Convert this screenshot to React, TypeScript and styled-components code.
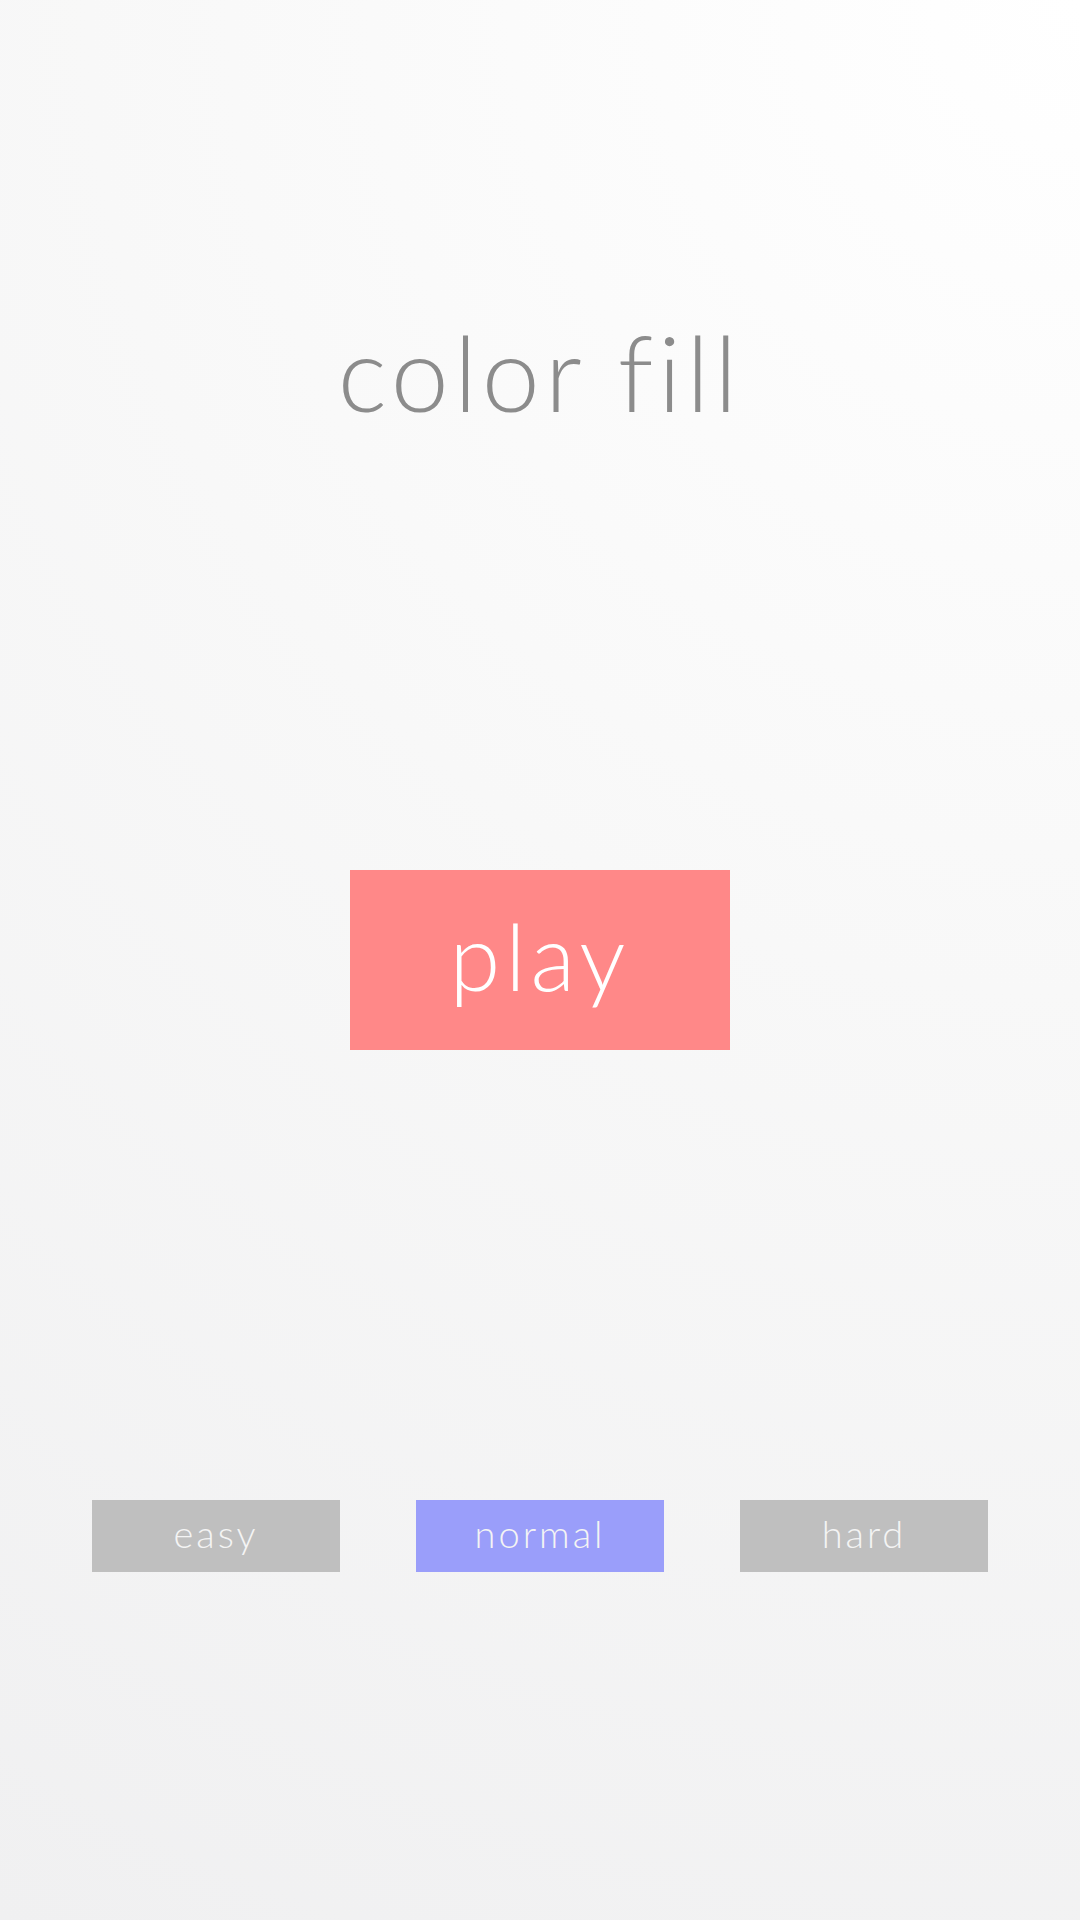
import React, { useState } from "react";
import styled, { createGlobalStyle } from "styled-components";

const GlobalStyle = createGlobalStyle`
  html, body {
    margin: 0;
    padding: 0;
  }
  body {
    font-family: "Lato", "Open Sans", sans-serif;
  }
`;

const Screen = styled.div`
  width: 1080px;
  height: 1920px;
  display: flex;
  flex-direction: column;
  align-items: center;
  background: radial-gradient(circle at 100% 0%, #ffffff 0%, #f8f8f8 45%, #f0f0f1 100%);
  overflow: hidden;
`;

const Title = styled.h1`
  margin: 310px 0 0;
  height: 125px;
  font-size: 104px;
  font-weight: 300;
  line-height: 1.2;
  letter-spacing: 5px;
  color: #8c8c8c;
`;

const PlayButton = styled.button`
  margin-top: 435px;
  width: 380px;
  height: 180px;
  border: none;
  background: #ff8888;
  color: #ffffff;
  font-family: inherit;
  font-size: 92px;
  font-weight: 300;
  letter-spacing: 5px;
  padding: 0 0 10px;
  cursor: pointer;
`;

const Levels = styled.div`
  margin-top: 450px;
  display: flex;
  gap: 76px;
`;

const LevelButton = styled.button<{ $active: boolean }>`
  width: 248px;
  height: 72px;
  border: none;
  background: ${({ $active }) => ($active ? "#9a9efa" : "#bfbfbf")};
  color: #f4f4f4;
  font-family: inherit;
  font-size: 38px;
  font-weight: 300;
  letter-spacing: 3px;
  padding: 0 0 6px;
  cursor: pointer;
`;

const levels = ["easy", "normal", "hard"];

const App: React.FC = () => {
  const [level, setLevel] = useState("normal");

  return (
    <>
      <GlobalStyle />
      <Screen>
        <Title>color fill</Title>
        <PlayButton>play</PlayButton>
        <Levels>
          {levels.map((l) => (
            <LevelButton key={l} $active={l === level} onClick={() => setLevel(l)}>
              {l}
            </LevelButton>
          ))}
        </Levels>
      </Screen>
    </>
  );
};

export default App;
